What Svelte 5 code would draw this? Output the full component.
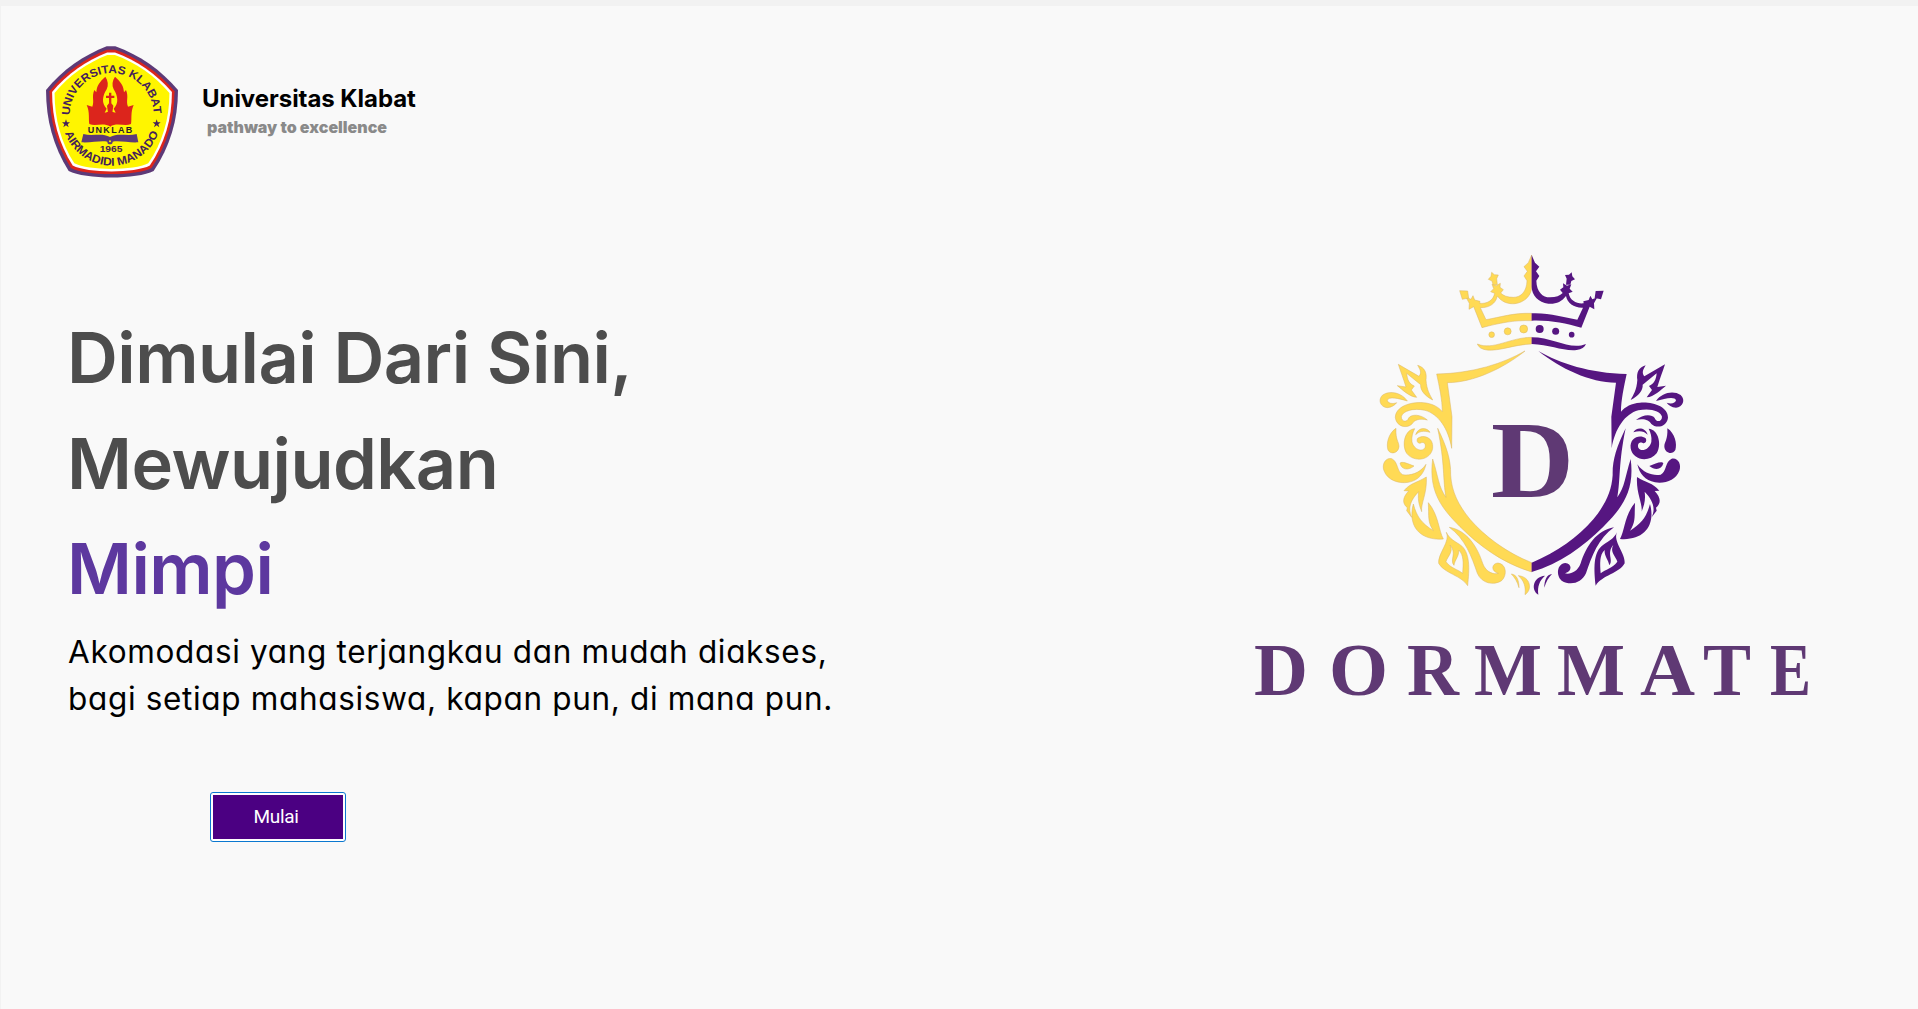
<script>
  const wordmark = [
    { ch: 'D', x: 14, w: 54 },
    { ch: 'O', x: 89, w: 59 },
    { ch: 'R', x: 167, w: 52 },
    { ch: 'M', x: 234, w: 68 },
    { ch: 'M', x: 317, w: 68 },
    { ch: 'A', x: 400, w: 55 },
    { ch: 'T', x: 463, w: 48 },
    { ch: 'E', x: 530, w: 41 }
  ];
</script>

{#snippet ornament()}
  <!-- crown -->
  <path d="M485 45 L475 68 L462 80 L472 94 L462 108 L471 122 C470 156 452 172 430 172 C412 172 400 167 392 159 L400 149 L390 142 L391 130 L379 137 L366 133 L371 146 L362 155 L374 160 C370 182 350 192 329 190 L330 184 L314 180 L309 167 L303 178 L288 172 L298 190 L297 208 L311 200 L336 263 C385 250 430 240 485 242 L485 220 C430 218 390 232 348 239 L331 203 C358 204 378 190 382 168 C395 186 414 193 435 191 C465 187 485 165 485 140 Z" />
  <path d="M365 97 L373 104 L385 105 L380 116 L382 134 L369 134 L366 123 L355 118 L363 109 Z" />
  <path d="M269 152 L293 153 L296 174 L277 178 Z" />
  <circle cx="365" cy="284" r="8.5" />
  <circle cx="413" cy="274" r="10.5" />
  <circle cx="461" cy="267" r="12" />
  <path d="M322 312 C370 332 420 292 485 292 L485 312 C430 314 390 334 350 330 C335 328 326 322 322 312 Z" />
  <!-- upper shield edge and scroll -->
  <path d="M465 333 C400 385 310 428 232 428 L246 530 L245 625 C235 565 205 522 165 511 C130 503 98 513 94 530 C94 546 112 548 116 534 C124 522 152 522 172 540 C150 534 132 540 126 552 C112 566 80 562 76 533 C76 500 120 485 160 488 C185 490 205 500 217 515 C217 480 208 440 200 402 C310 400 400 370 465 333 Z" />
  <path d="M112 483 C95 458 60 450 38 465 C22 480 32 502 52 503 C65 502 75 495 80 488 C68 493 53 490 52 481 C55 468 85 475 112 483 Z" />
  <path d="M85 373 L147 409 C156 398 150 388 143 376 C165 382 171 400 168 420 C170 450 180 465 188 480 C165 468 150 450 152 434 L110 400 C112 420 118 432 133 438 L124 450 L140 472 C118 470 98 450 82 437 L108 441 C100 415 92 395 85 373 Z" />
  <!-- side swirls -->
  <path d="M78 565 C55 580 48 612 54 630 C62 645 85 640 87 620 C87 605 76 600 78 565 Z" />
  <path d="M134 566 C104 568 94 615 110 640 C132 668 182 662 188 625 C192 592 160 582 143 595 C138 604 145 612 152 609 C161 604 169 612 165 623 C158 637 132 630 126 606 C124 590 128 578 134 566 Z" />
  <path d="M137 584 C145 560 172 562 180 577 C160 571 148 574 137 584 Z" />
  <path d="M168 673 C150 700 120 708 98 704 C80 695 85 665 65 656 C45 652 35 675 42 692 C52 720 85 732 115 727 C145 722 162 700 168 673 Z" />
  <path d="M90 670 C95 662 115 672 132 678 C115 692 95 690 90 670 Z" />
  <!-- lower leaves -->
  <path d="M169 711 C142 728 122 728 102 752 L116 753 C95 775 98 792 112 803 L110 812 L125 832 C112 804 122 780 146 755 C142 785 150 800 155 815 C152 790 172 760 169 711 Z" />
  <path d="M130 792 C112 858 150 903 220 897 C206 872 206 825 175 788 C177 830 172 845 190 872 C155 850 140 830 130 792 Z" />
  <!-- lower shield edge -->
  <path d="M203 565 C230 620 243 660 242 705 C245 755 265 795 300 838 C345 890 410 938 485 968 L485 996 C400 970 330 920 270 860 C215 805 175 755 188 657 C205 710 205 740 228 772 C218 720 225 670 203 565 Z" />
  <path d="M238 862 C290 870 322 920 338 970 C348 998 372 1004 385 1000 C362 994 364 970 384 969 C410 972 412 1006 395 1022 C370 1038 335 1030 322 1000 C305 950 285 895 238 862 Z" />
  <path fill-rule="evenodd" d="M229 877 C242 905 203 940 206 970 C222 1000 274 1006 293 1037 C298 990 302 935 270 914 C252 902 240 898 229 877 Z M240 915 C252 935 232 950 228 965 C242 985 264 988 278 1000 C280 970 282 945 266 930 C268 948 254 960 252 976 C238 960 262 940 240 915 Z" />
  <path d="M424 1002 C440 1004 447 1020 447 1043 C442 1025 434 1012 424 1002 Z" />
  <path d="M445 1007 C482 1010 488 1050 465 1064 C468 1040 462 1022 445 1007 Z" />
{/snippet}

{#snippet flame()}
  <path d="M208 120 C190 136 182 148 181 167 L175 160 C166 182 176 192 169 210 L152 205 C162 226 157 250 160 262 C180 270 202 256 223 270 L223 224 L206 228 L212 216 C196 200 199 178 212 158 C218 145 216 132 208 120 Z" />
{/snippet}

<main>
  <header>
    <svg class="seal" viewBox="30 29 396 394" aria-label="Universitas Klabat">
      <defs>
        <path id="pentagon" d="M212 29 H238 C310 55 375 100 426 160 C426 250 402 330 353 403 C305 429 147 429 98 403 C52 330 30 250 30 160 C78 100 145 55 212 29 Z" />
        <path id="arc-top" d="M101 236 A126 127 0 0 1 353 236" />
        <path id="arc-bottom" d="M85 283 A149 149 0 0 0 369 283" />
        <path id="star" d="M0 -13 L3 -4 L12 -4 L5 2 L8 11 L0 5 L-8 11 L-5 2 L-12 -4 L-3 -4 Z" />
      </defs>
      <use href="#pentagon" fill="#5d3a78" />
      <use href="#pentagon" fill="#dc251c" transform="translate(228 227) scale(.947) translate(-228 -227)" />
      <use href="#pentagon" fill="#fff" transform="translate(228 227) scale(.908) translate(-228 -227)" />
      <use href="#pentagon" fill="#fff500" transform="translate(228 227) scale(.87) translate(-228 -227)" />
      <g class="ring">
        <text><textPath href="#arc-top" textLength="393" lengthAdjust="spacingAndGlyphs">UNIVERSITAS KLABAT</textPath></text>
        <text><textPath href="#arc-bottom" startOffset="6" textLength="364" lengthAdjust="spacingAndGlyphs">AIRMADIDI MANADO</textPath></text>
        <use href="#star" x="90" y="261" />
        <use href="#star" x="362" y="261" />
      </g>
      <g fill="#dc251c">
        {@render flame()}
        <g transform="translate(445 0) scale(-1 1)">{@render flame()}</g>
        <path d="M219 168 H226 V177 H235 V184 H226 V200 L232 207 L229 228 H216 L213 207 L219 200 V184 H210 V177 H219 Z" />
      </g>
      <text class="name" x="155" y="290" textLength="134">UNKLAB</text>
      <path fill="#5d3a78" d="M142 292 C170 300 198 287 222 301 C246 287 274 300 302 292 L307 317 C280 319 250 311 230 315 A8 8 0 0 1 214 315 C194 311 165 319 136 317 Z" />
      <circle cx="222" cy="314" r="3" fill="#fff500" />
      <text class="year" x="191" y="346" textLength="68" lengthAdjust="spacingAndGlyphs">1965</text>
    </svg>
    <div class="brand">
      <strong>Universitas Klabat</strong>
      <span>pathway to excellence</span>
    </div>
  </header>

  <div class="hero">
    <section>
      <h1>Dimulai Dari Sini,<br />Mewujudkan<br /><em>Mimpi</em></h1>
      <p>Akomodasi yang terjangkau dan mudah diakses,<br />bagi setiap mahasiswa, kapan pun, di mana pun.</p>
      <button>Mulai</button>
    </section>

    <svg class="logo" viewBox="0 0 590 470" aria-label="Dormmate">
      <g transform="translate(130 0) scale(.33333)">
        <g fill="#ffda55" stroke="#d9b565" stroke-width="1.5">{@render ornament()}</g>
        <g fill="#561681" transform="translate(970 0) scale(-1 1)">{@render ornament()}</g>
      </g>
      <text class="initial" x="251" y="257" textLength="83" lengthAdjust="spacingAndGlyphs">D</text>
      {#each wordmark as l}
        <text class="letter" x={l.x} y="454.500" textLength={l.w} lengthAdjust="spacingAndGlyphs">{l.ch}</text>
      {/each}
    </svg>
  </div>
</main>

<style>
  :global(body) {
    background: #f2f2f2;
    overflow: hidden;
  }
  main {
    box-sizing: border-box;
    height: 1003px;
    margin: 6px 0 0 1px;
    padding: 40px 88px 0 45px;
    background: #f9f9f9;
    font-family: Inter, sans-serif;
  }
  header {
    display: flex;
    height: 132px;
    gap: 24px;
  }
  .seal {
    width: 132px;
    height: 132px;
  }
  .ring {
    fill: #44205a;
    font: bold 34px 'Liberation Sans', sans-serif;
  }
  .name,
  .year {
    fill: #2c1a2c;
    font: bold 27px 'Liberation Sans', sans-serif;
  }
  .year {
    fill: #44205a;
  }
  .brand {
    display: flex;
    flex-direction: column;
    padding-top: 38px;
  }
  .brand strong {
    font-size: 24px;
    font-weight: 700;
    letter-spacing: -0.05px;
    line-height: 30px;
  }
  .brand span {
    padding-left: 5px;
    color: #8a8a8a;
    font-size: 16px;
    font-weight: 900;
    line-height: 26px;
  }
  .hero {
    display: flex;
    justify-content: space-between;
    padding-top: 62px;
  }
  section {
    padding: 65px 0 0 22px;
  }
  h1 {
    margin: 0 0 0 -1px;
    color: #4d4d4d;
    font-size: 70.4px;
    font-weight: 600;
    letter-spacing: -0.54px;
    line-height: 105.6px;
  }
  em {
    color: #5d389f;
    font-style: normal;
  }
  p {
    margin: 6px 0 0;
    font-size: 31.5px;
    letter-spacing: 0.67px;
    line-height: 47px;
    font-feature-settings: 'cv11';
    white-space: nowrap;
  }
  button {
    display: block;
    box-sizing: border-box;
    width: 134px;
    height: 48px;
    margin: 71px 0 0 143px;
    padding: 0 4px 0 0;
    border: 2px solid #fff;
    border-radius: 2px;
    background: #4b0082;
    background-clip: padding-box;
    color: #fff;
    font: 19px Roboto, sans-serif;
    letter-spacing: -0.3px;
    outline: 1px solid #0b78d0;
  }
  .logo {
    width: 590px;
    height: 470px;
  }
  .initial,
  .letter {
    fill: #5f3974;
    font: bold 110px 'Liberation Serif', serif;
  }
  .letter {
    font-size: 74px;
  }
</style>
